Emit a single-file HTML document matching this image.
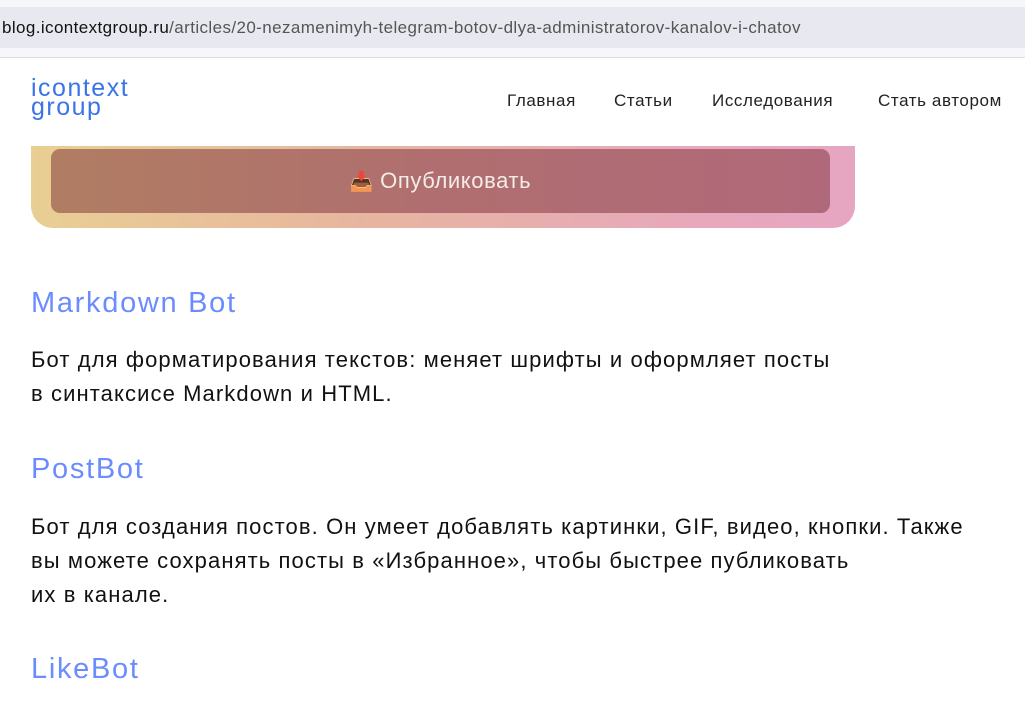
<!DOCTYPE html>
<html><head><meta charset="utf-8"><style>
body{margin:0;width:1025px;height:712px;overflow:hidden;background:#fff;font-family:"Liberation Sans",sans-serif;position:relative}
.top{position:absolute;left:0;top:0;width:1025px;height:57px;background:#f7f7fb;border-bottom:1px solid #dcdce4}
.url{position:absolute;left:0;top:7px;width:1025px;height:41px;background:#e8e8f1;font-size:17px;line-height:41px;color:#555;padding-left:2px;white-space:nowrap;letter-spacing:0.4px}
.url b{font-weight:normal;color:#111}
.logo{position:absolute;left:31px;top:79px;color:#3b73e8;font-size:25px;line-height:19px;letter-spacing:1.5px}
.nav{position:absolute;top:91px;font-size:17px;color:#222;letter-spacing:0.6px}
.banner{position:absolute;left:31px;top:146px;width:824px;height:82px;border-radius:0 0 22px 22px;background:linear-gradient(90deg,#e9cf94 0%,#e7b59f 40%,#e7a8bb 80%,#e6a6c2 100%)}
.btn{position:absolute;left:20px;top:3px;width:779px;height:64px;border-radius:9px;background:linear-gradient(90deg,#b07d62,#b06e70 50%,#b0697a);color:#f4ece6;font-size:22px;text-align:center;line-height:64px;letter-spacing:0.6px}
.btn span{font-size:19px;letter-spacing:0}
h2{position:absolute;left:31px;margin:0;font-weight:normal;color:#6b8cff;font-size:29px;line-height:34px;letter-spacing:1.7px}
p{position:absolute;left:31px;margin:0;font-size:22px;line-height:34px;color:#111;white-space:nowrap;letter-spacing:1.1px}
</style></head><body>
<div class="top"><div class="url"><b>blog.icontextgroup.ru</b>/articles/20-nezamenimyh-telegram-botov-dlya-administratorov-kanalov-i-chatov</div></div>
<div class="logo">icontext<br>group</div>
<div class="nav" style="left:507px">Главная</div>
<div class="nav" style="left:614px">Статьи</div>
<div class="nav" style="left:712px">Исследования</div>
<div class="nav" style="left:878px">Стать автором</div>
<div class="banner"><div class="btn"><span>📥</span> Опубликовать</div></div>
<h2 style="top:286px">Markdown Bot</h2>
<p style="top:343px">Бот для форматирования текстов: меняет шрифты и оформляет посты<br>в синтаксисе Markdown и HTML.</p>
<h2 style="top:452px">PostBot</h2>
<p style="top:510px">Бот для создания постов. Он умеет добавлять картинки, GIF, видео, кнопки. Также<br>вы можете сохранять посты в «Избранное», чтобы быстрее публиковать<br>их в канале.</p>
<h2 style="top:652px">LikeBot</h2>
</body></html>
